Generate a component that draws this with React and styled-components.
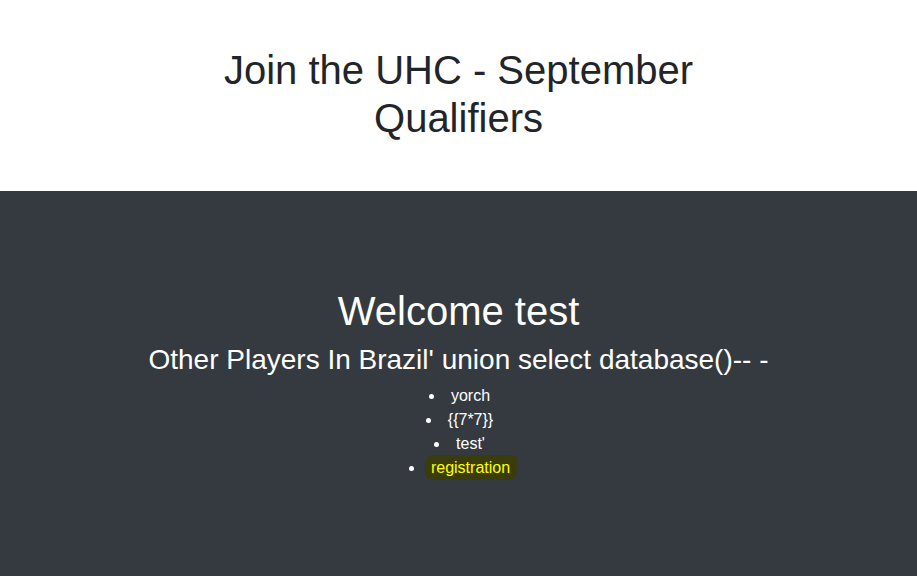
import React from 'react';
import styled, { createGlobalStyle } from 'styled-components';

const GlobalStyle = createGlobalStyle`
	html, body {
		margin: 0;
		padding: 0;
		background: #343a40;
	}
	body {
		font-family: "Liberation Sans", Arial, sans-serif;
		font-size: 16px;
		line-height: 1.5;
		color: #212529;
	}
`;

// Page wrapper
const Page = styled.div`
	display: flex;
	flex-direction: column;
	min-height: 576px;
`;

// White header block
const Header = styled.header`
	background: #ffffff;
	padding: 46px 16px 49px;
	text-align: center;
`;

const Title = styled.h1`
	margin: 0 auto;
	max-width: 520px;
	font-size: 40px;
	font-weight: 400;
	line-height: 1.2;
	color: #212529;
`;

// Dark section
const Main = styled.main`
	flex: 1;
	background: #343a40;
	color: #ffffff;
	text-align: center;
	padding-top: 96px;
`;

const Welcome = styled.h1`
	margin: 0 0 8px;
	font-size: 40px;
	font-weight: 400;
	line-height: 1.2;
`;

const Subtitle = styled.h3`
	margin: 0 0 7px;
	font-size: 28px;
	font-weight: 400;
	line-height: 1.2;
`;

const PlayerList = styled.ul`
	margin: 0;
	padding: 0 0 0 2px;
	list-style: disc inside;
`;

const Player = styled.li`
	line-height: 24px;
`;

// Marker-style highlight, blob spills past the word without moving it
const Highlight = styled.mark`
	display: inline-block;
	background: #3a3c0c;
	color: #ffff00;
	line-height: 17px;
	padding: 4px 7px 4px 6px;
	margin: -1px -7px 0 -6px;
	border-radius: 9px 6px 8px 10px / 8px 5px 9px 7px;
`;

const players = ['yorch', '{{7*7}}', "test'"];

export default function App() {
	return (
		<Page>
			<GlobalStyle />
			<Header>
				<Title>Join the UHC - September Qualifiers</Title>
			</Header>
			<Main>
				<Welcome>Welcome test</Welcome>
				<Subtitle>Other Players In Brazil' union select database()-- -</Subtitle>
				<PlayerList>
					{players.map((p) => (
						<Player key={p}>{p}</Player>
					))}
					<Player>
						<Highlight>registration</Highlight>
					</Player>
				</PlayerList>
			</Main>
		</Page>
	);
}
